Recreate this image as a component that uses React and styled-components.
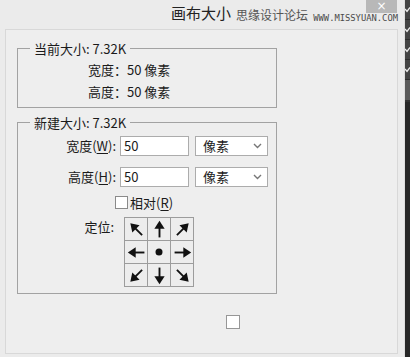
import React from 'react';
import styled, { createGlobalStyle } from 'styled-components';

const GlobalStyle = createGlobalStyle`
  html, body {
    margin: 0;
    padding: 0;
    background: #ebebeb;
    overflow: hidden;
  }
  body {
    font-family: "Noto Sans CJK SC", "Noto Sans", sans-serif;
    color: #1b1b1b;
  }
`;

const Screen = styled.div`
  display: flex;
  width: 410px;
  height: 357px;
  overflow: hidden;
`;

const Dialog = styled.div`
  flex: 0 0 405px;
  display: flex;
  flex-direction: column;
  background: #ebebeb;
  border-right: 1px solid #dedede;
  box-sizing: border-box;
`;

const TitleBar = styled.div`
  position: relative;
  height: 29px;
  display: flex;
  align-items: flex-start;
  padding: 0 7px 0 171px;
  box-sizing: border-box;
  white-space: nowrap;
`;

const Title = styled.span`
  flex-shrink: 0;
  font-size: 15px;
  line-height: 16px;
  margin-top: 5px;
  color: #222;
`;

const SiteName = styled.span`
  flex-shrink: 0;
  font-size: 12px;
  line-height: 14px;
  margin-top: 8px;
  margin-left: 5px;
  color: #555;
`;

const CloseButton = styled.div`
  flex: 0 0 31px;
  margin-left: auto;
  height: 13px;
  background: #b8b8b8;
  color: #fff;
  font-family: "DejaVu Sans", sans-serif;
  font-size: 12px;
  line-height: 12px;
  text-align: center;
`;

/* watermark printed over the title bar */
const SiteUrl = styled.span`
  position: absolute;
  right: 6px;
  top: 13px;
  font-family: "DejaVu Sans Mono", monospace;
  font-size: 8.8px;
  line-height: 10px;
  color: #4a4a4a;
`;

const Panel = styled.div`
  margin-left: 5px;
  width: 393px;
  height: 325px;
  box-sizing: border-box;
  border: 1px solid #d8d8d8;
  background: #eeeeee;
  padding: 10px 0 0 11px;
  display: flex;
  flex-direction: column;
`;

const Group = styled.fieldset`
  margin: ${p => p.$top || 0}px 0 0 0;
  padding: 0;
  width: 260px;
  min-width: 0;
  box-sizing: border-box;
  border: 1px solid #a2a2a2;
`;

const Legend = styled.legend`
  font-size: 13px;
  line-height: 17px;
  padding: 0 4px;
  margin-left: 12px;
  color: #1b1b1b;
`;

const InfoBody = styled.div`
  padding: 2px 0 4px 70px;
`;

const InfoRow = styled.div`
  height: 22px;
  font-size: 13px;
  line-height: 22px;
`;

const FormBody = styled.div`
  padding: 5px 0 6px 0;
  display: flex;
  flex-direction: column;
`;

const FieldRow = styled.div`
  display: flex;
  align-items: center;
  height: 20px;
  margin-top: ${p => p.$gap || 0}px;
`;

const Label = styled.label`
  width: ${p => p.$w || 98}px;
  text-align: right;
  font-size: 13px;
  line-height: 20px;
  u { text-underline-offset: 2px; }
`;

const TextBox = styled.div`
  margin-left: 4px;
  width: 69px;
  height: 20px;
  box-sizing: border-box;
  border: 1px solid #acacac;
  background: #fff;
  padding-left: 3px;
  font-size: 13px;
  line-height: 18px;
`;

const Select = styled.div`
  margin-left: 6px;
  width: 73px;
  height: 20px;
  box-sizing: border-box;
  border: 1px solid #acacac;
  background: #fff;
  padding: 0 5px 0 7px;
  display: flex;
  align-items: center;
  justify-content: space-between;
  font-size: 13px;
  line-height: 18px;
`;

const CheckRow = styled.div`
  display: flex;
  align-items: center;
  height: 17px;
  margin-top: 7px;
  padding-left: 97px;
  font-size: 13px;
  u { text-underline-offset: 2px; }
`;

const Box = styled.span`
  display: inline-block;
  width: ${p => p.$size || 13}px;
  height: ${p => p.$size || 13}px;
  box-sizing: border-box;
  border: 1px solid #8a8a8a;
  background: #fff;
  margin-right: 2px;
`;

const AnchorRow = styled.div`
  display: flex;
  align-items: flex-start;
  margin-top: 6px;
`;

const AnchorLabel = styled.span`
  width: 96px;
  text-align: right;
  font-size: 13px;
  line-height: 17px;
  margin-top: 1px;
`;

const AnchorGrid = styled.div`
  margin-left: 10px;
  display: grid;
  grid-template-columns: repeat(3, 22px);
  grid-template-rows: repeat(3, 22px);
  gap: 1px;
  padding: 1px;
  background: #9c9c9c;
`;

const Cell = styled.div`
  background: #ededed;
  display: flex;
  align-items: center;
  justify-content: center;
`;

const Footer = styled.div`
  margin-top: 21px;
  padding-left: 209px;
`;

const FooterBox = styled.div`
  width: 14px;
  height: 14px;
  box-sizing: border-box;
  border: 1px solid #979797;
  background: #fff;
`;

const Strip = styled.div`
  flex: 0 0 5px;
  display: flex;
  flex-direction: column;
  background: #272727;
`;

const StripItem = styled.div`
  height: 19px;
  border-bottom: 1px solid #2e2e2e;
  background: #444;
  display: flex;
  align-items: center;
`;

const StripBand = styled.div`
  height: 20px;
  background: #5a5a5a;
  border-bottom: 2px solid #333;
`;

const Arrow = ({ angle }) => (
  <svg width="19" height="19" viewBox="0 0 24 24">
    <g transform={`rotate(${angle} 12 12)`}>
      <line x1="12" y1="22" x2="12" y2="9" stroke="#111" strokeWidth="2.4" />
      <polygon points="12,1 5.5,11 18.5,11" fill="#111" />
    </g>
  </svg>
);

const Dot = () => (
  <svg width="8" height="8" viewBox="0 0 8 8">
    <circle cx="4" cy="4" r="3.5" fill="#111" />
  </svg>
);

const Chevron = () => (
  <svg width="9" height="6" viewBox="0 0 9 6">
    <polyline points="1,1 4.5,4.5 8,1" fill="none" stroke="#777" strokeWidth="1.4" />
  </svg>
);

const Tick = () => (
  <svg width="5" height="6" viewBox="0 0 5 6">
    <polyline points="0,2 2,4.5 5,0.5" fill="none" stroke="#eee" strokeWidth="1.3" />
  </svg>
);

const anchors = [-45, 0, 45, -90, null, 90, -135, 180, 135];

const App = () => {
  return (
    <Screen>
      <GlobalStyle />
      <Dialog>
        <TitleBar>
          <Title>画布大小</Title>
          <SiteName>思缘设计论坛</SiteName>
          <CloseButton>×</CloseButton>
          <SiteUrl>WWW.MISSYUAN.COM</SiteUrl>
        </TitleBar>
        <Panel>
          <Group>
            <Legend>当前大小: 7.32K</Legend>
            <InfoBody>
              <InfoRow>宽度：50 像素</InfoRow>
              <InfoRow>高度：50 像素</InfoRow>
            </InfoBody>
          </Group>
          <Group $top={6}>
            <Legend>新建大小: 7.32K</Legend>
            <FormBody>
              <FieldRow>
                <Label>宽度(<u>W</u>):</Label>
                <TextBox>50</TextBox>
                <Select>像素<Chevron /></Select>
              </FieldRow>
              <FieldRow $gap={11}>
                <Label>高度(<u>H</u>):</Label>
                <TextBox>50</TextBox>
                <Select>像素<Chevron /></Select>
              </FieldRow>
              <CheckRow>
                <Box />相对(<u>R</u>)
              </CheckRow>
              <AnchorRow>
                <AnchorLabel>定位:</AnchorLabel>
                <AnchorGrid>
                  {anchors.map((a, i) => (
                    <Cell key={i}>{a === null ? <Dot /> : <Arrow angle={a} />}</Cell>
                  ))}
                </AnchorGrid>
              </AnchorRow>
            </FormBody>
          </Group>
          <Footer>
            <FooterBox />
          </Footer>
        </Panel>
      </Dialog>
      <Strip>
        {[0, 1, 2, 3].map(i => (
          <StripItem key={i}><Tick /></StripItem>
        ))}
        <StripBand />
      </Strip>
    </Screen>
  );
};

export default App;
